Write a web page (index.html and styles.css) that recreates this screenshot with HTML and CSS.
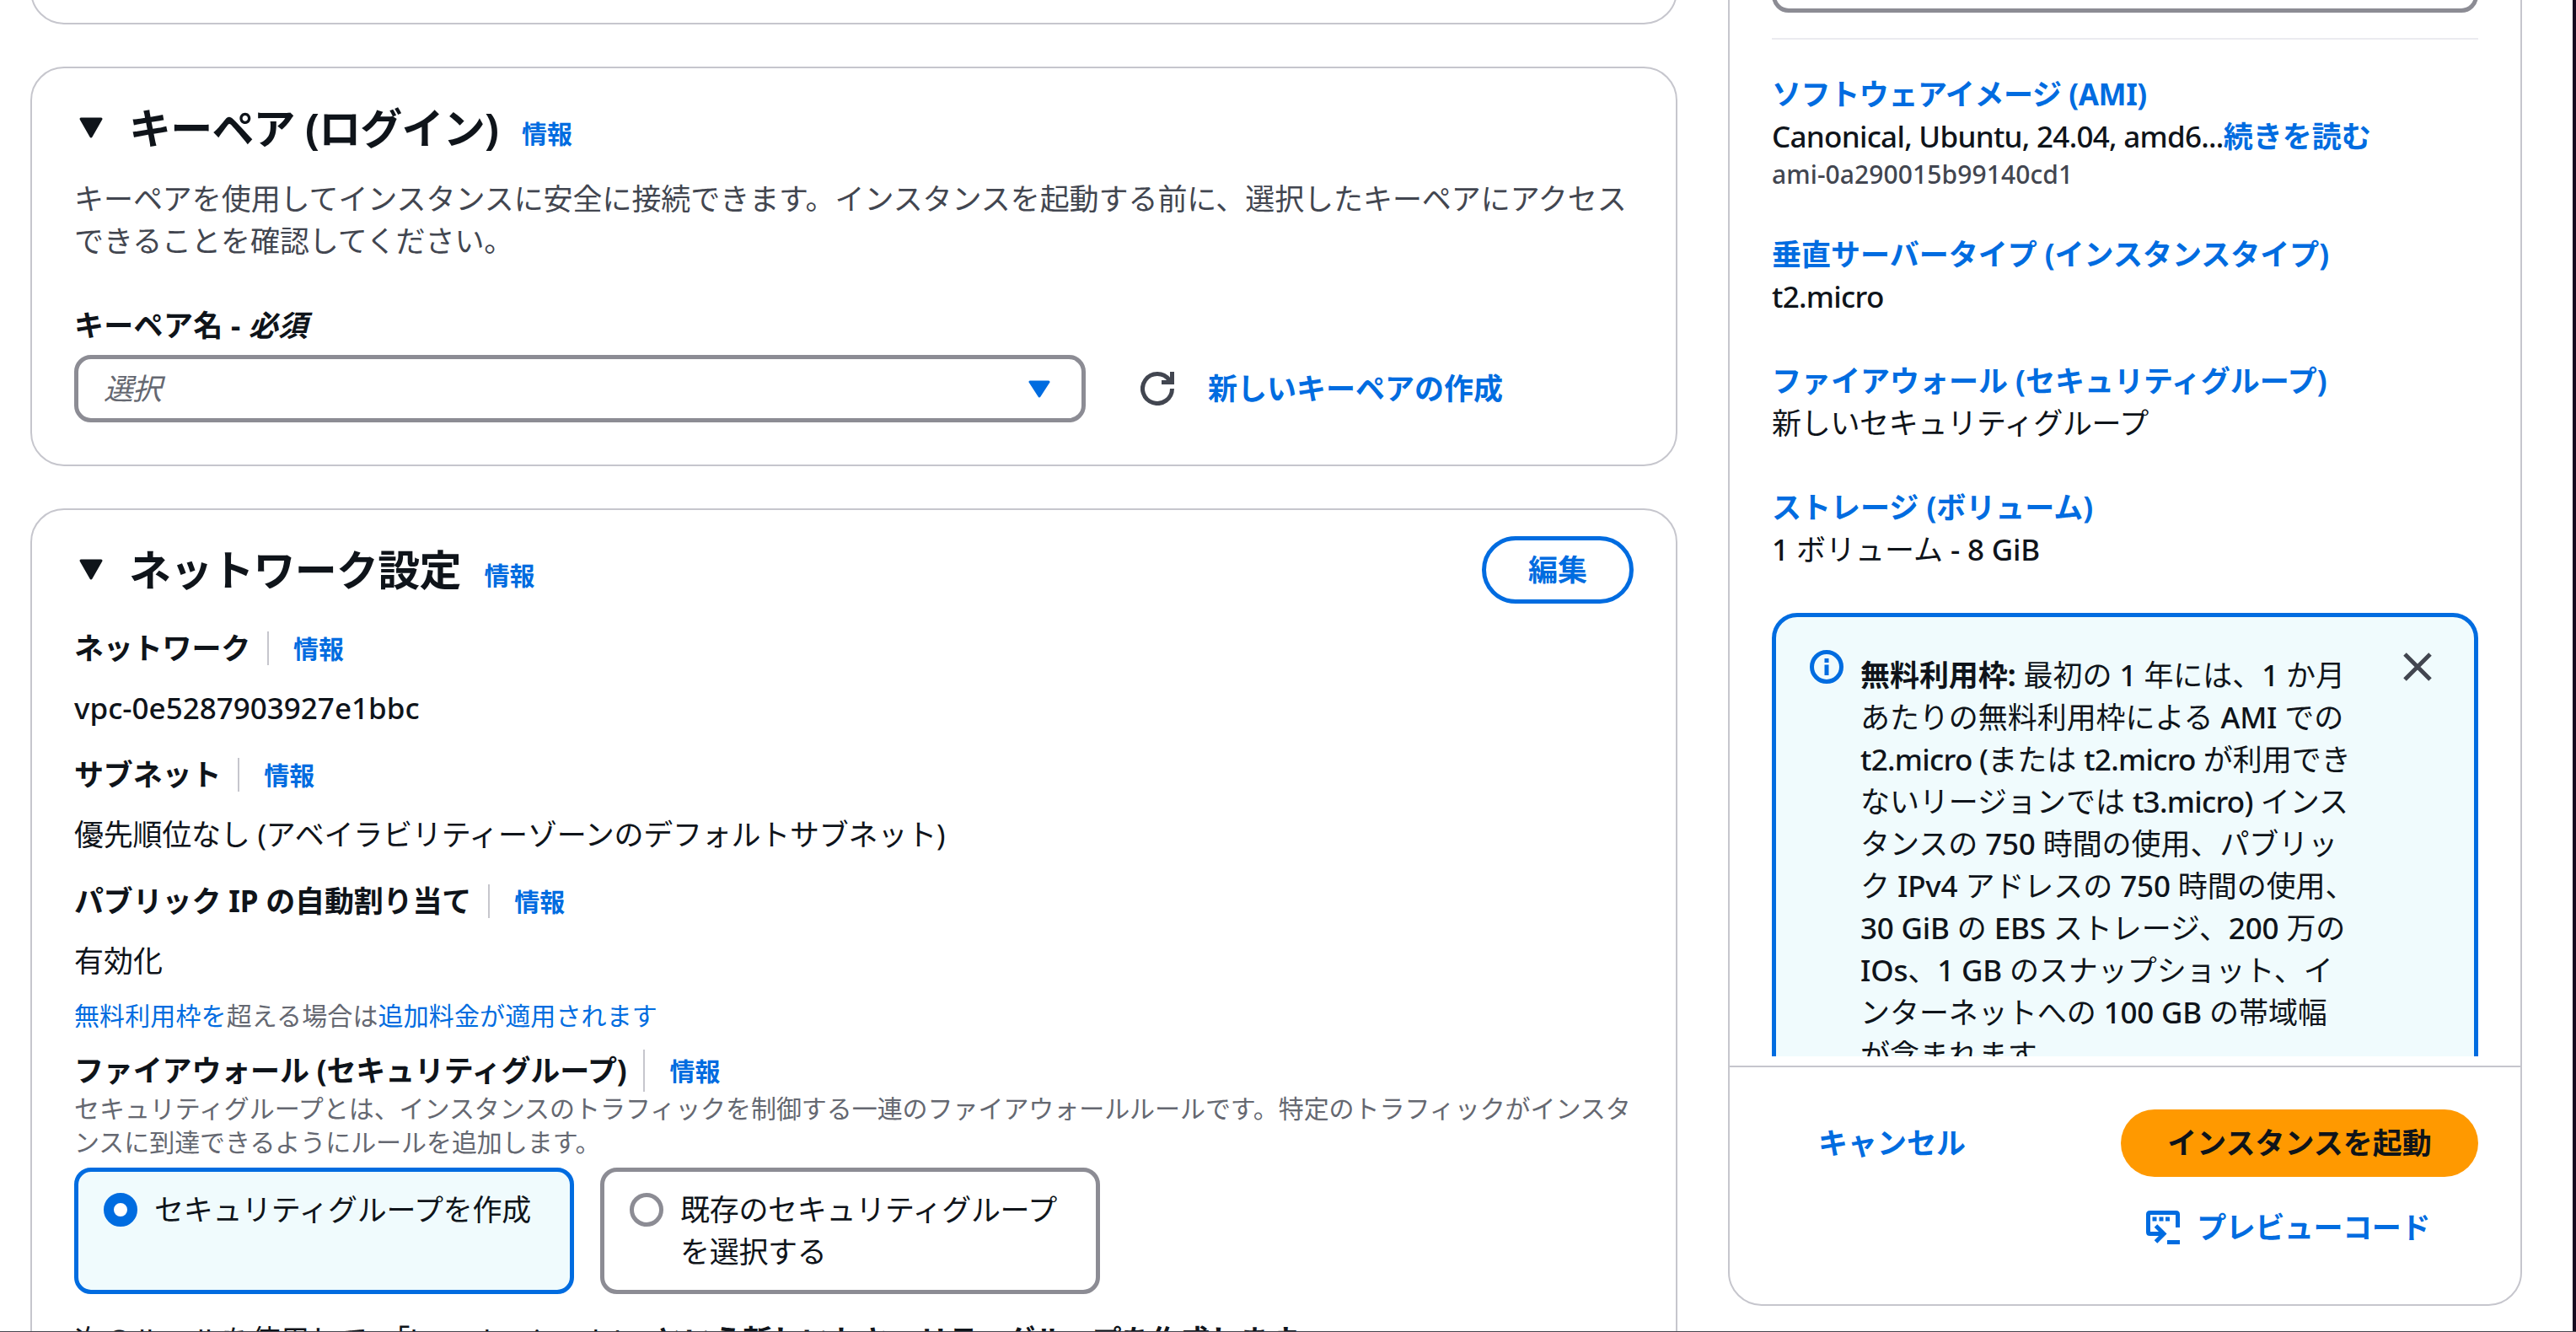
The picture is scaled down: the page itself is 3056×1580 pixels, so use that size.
FILE: index.html
```
<!DOCTYPE html>
<html lang="ja">
<head>
<meta charset="utf-8">
<title>インスタンスを起動</title>
<link rel="stylesheet" href="styles.css">
</head>
<body>
<div class="page">
  <main class="main">
    <section class="card card-previous"></section>

    <section class="card card-keypair">
      <header class="card-header">
        <svg class="caret" viewBox="0 0 30 26"><path d="M3 2h24L15 23z"/></svg>
        <h2 class="heading">キーペア (ログイン)</h2>
        <a class="info">情報</a>
      </header>
      <p class="description">キーペアを使用してインスタンスに安全に接続できます。インスタンスを起動する前に、選択したキーペアにアクセス<br>できることを確認してください。</p>
      <div class="label required">キーペア名 - <i>必須</i></div>
      <div class="select-row">
        <div class="select">
          <span class="placeholder">選択</span>
          <svg class="select-caret" viewBox="0 0 26 21"><path d="M2 2h22L13 19z"/></svg>
        </div>
        <svg class="refresh" viewBox="0 0 40 40"><path d="M37.5 20A17.5 17.5 0 1 1 34 9.500L37.500 12.500M37.500 0v12.500H25"/></svg>
        <a class="link">新しいキーペアの作成</a>
      </div>
    </section>

    <section class="card card-network">
      <header class="card-header network-header">
        <svg class="caret" viewBox="0 0 30 26"><path d="M3 2h24L15 23z"/></svg>
        <h2 class="heading">ネットワーク設定</h2>
        <a class="info">情報</a>
        <button class="edit">編集</button>
      </header>
      <div class="field first"><span class="label">ネットワーク</span><a class="info divided">情報</a></div>
      <div class="value latin vpc">vpc-0e5287903927e1bbc</div>
      <div class="field"><span class="label">サブネット</span><a class="info divided">情報</a></div>
      <div class="value subnet">優先順位なし (アベイラビリティーゾーンのデフォルトサブネット)</div>
      <div class="field"><span class="label">パブリック IP の自動割り当て</span><a class="info divided">情報</a></div>
      <div class="value">有効化</div>
      <div class="small charge"><a>無料利用枠を</a>超える場合は<a>追加料金が適用されます</a></div>
      <div class="field firewall"><span class="label">ファイアウォール (セキュリティグループ)</span><a class="info divided tall">情報</a></div>
      <div class="small">セキュリティグループとは、インスタンスのトラフィックを制御する一連のファイアウォールルールです。特定のトラフィックがインスタ<br>ンスに到達できるようにルールを追加します。</div>
      <div class="tiles">
        <label class="tile selected"><span class="radio"></span><span>セキュリティグループを作成</span></label>
        <label class="tile"><span class="radio"></span><span>既存のセキュリティグループ<br>を選択する</span></label>
      </div>
      <div class="rules">次のルールを使用して、「<span class="group-name">launch-wizard-1</span>」<b>という新しいセキュリティグループを作成します。</b></div>
    </section>
  </main>

  <aside class="summary">
    <div class="summary-body">
      <div class="summary-input"></div>
      <hr class="rule">
      <div class="item">
        <a class="item-title ami-title">ソフトウェアイメージ (AMI)</a>
        <div><span class="latin ami-name">Canonical, Ubuntu, 24.04, amd6...</span><a class="more">続きを読む</a></div>
        <div class="latin ami">ami-0a290015b99140cd1</div>
      </div>
      <div class="item">
        <a class="item-title">垂直サーバータイプ (インスタンスタイプ)</a>
        <div class="latin type">t2.micro</div>
      </div>
      <div class="item">
        <a class="item-title">ファイアウォール (セキュリティグループ)</a>
        <div class="group">新しいセキュリティグループ</div>
      </div>
      <div class="item">
        <a class="item-title">ストレージ (ボリューム)</a>
        <div><span class="latin">1</span> ボリューム <span class="latin">- 8 GiB</span></div>
      </div>
      <div class="alert">
        <svg class="alert-icon" viewBox="0 0 40 40"><circle cx="20" cy="20" r="17.5"/><path d="M20 17.500v12.500M20 10v5"/></svg>
        <div class="alert-text"><b>無料利用枠:</b> 最初の <span class="latin">1</span> 年には、<span class="latin">1</span> か月<br>あたりの無料利用枠による <span class="latin">AMI</span> での<br><span class="latin type">t2.micro (</span>または <span class="latin type">t2.micro</span> が利用でき<br>ないリージョンでは <span class="latin type">t3.micro)</span> インス<br>タンスの <span class="latin">750</span> 時間の使用、パブリッ<br>ク <span class="latin">IPv4</span> アドレスの <span class="latin">750</span> 時間の使用、<br><span class="latin">30 GiB</span> の <span class="latin">EBS</span> ストレージ、<span class="latin">200</span> 万の<br><span class="latin">IOs</span>、<span class="latin">1 GB</span> のスナップショット、イ<br>ンターネットへの <span class="latin">100 GB</span> の帯域幅<br>が含まれます。</div>
        <svg class="close" viewBox="0 0 34 34"><path d="M2 2l30 30M32 2L2 32"/></svg>
      </div>
    </div>
    <footer class="summary-footer">
      <div class="actions">
        <a class="link">キャンセル</a>
        <button class="launch">インスタンスを起動</button>
      </div>
      <a class="link preview">
        <svg class="preview-icon" viewBox="0 0 40 40"><path d="M37.500 20V4.500Q37.500 2.500 35.500 2.500H4.500Q2.500 2.500 2.500 4.500V25.500Q2.500 27.500 4.500 27.500H21M11.500 18l9.500 9.500L11.500 37M25 37.500h15"/><path class="dots" d="M7.500 10h5M15.500 10h5M23 10h5"/></svg>
        <span>プレビューコード</span>
      </a>
    </footer>
  </aside>
  <div class="window-edge"></div>
</div>
</body>
</html>
```
FILE: styles.css
```
* { box-sizing: border-box; }
html, body { margin: 0; height: 1580px; overflow: hidden; }
body {
  background: #fff;
  color: #0f141a;
  font: 400 35px/50px "Noto Sans", "Noto Sans CJK JP", sans-serif;
  text-spacing-trim: space-all;
  white-space: nowrap;
}
a { color: #006ce0; }
button { font: inherit; }
p, h2 { margin: 0; }
svg { display: block; flex: none; fill: none; }
.latin { font-weight: 500; letter-spacing: -0.2px; }
.page {
  display: flex;
  height: 1580px;
  overflow: hidden;
  border-bottom: 1px solid #48464f;
}

.main { flex: none; width: 1954px; margin-left: 36px; }
.card {
  border: 2px solid #c6c6cd;
  border-radius: 40px;
  padding: 0 50px;
}
.card-previous { height: 129px; margin-top: -100px; }
.card-keypair { height: 474px; margin-top: 50px; padding-top: 41px; }
.card-network { height: 1100px; margin-top: 50px; padding-top: 31px; }

.card-header { display: flex; align-items: center; height: 60px; }
.network-header { height: 80px; }
.caret { width: 30px; height: 26px; margin: 0 30px 0 5px; fill: #0f141a; stroke: #0f141a; stroke-width: 3; stroke-linejoin: round; }
.heading { font-size: 50px; line-height: 60px; font-weight: 700; letter-spacing: -0.8px; }
.info { font-size: 30px; line-height: 40px; font-weight: 600; }
.card-header .info { margin: 14px 0 0 28px; }
.description { margin-top: 29px; color: #424650; letter-spacing: -0.06px; }
.label { font-weight: 700; letter-spacing: -0.15px; }
.label.required { margin-top: 50px; letter-spacing: 0.3px; }

.select-row { display: flex; align-items: center; margin-top: 10px; }
.select {
  display: flex;
  align-items: center;
  justify-content: space-between;
  width: 1200px;
  height: 80px;
  padding: 0 37px 0 30px;
  border: 5px solid #8c8c94;
  border-radius: 20px;
}
.placeholder { color: #656871; font-style: italic; letter-spacing: -1px; }
.select-caret { width: 26px; height: 21px; fill: #006ce0; stroke: #006ce0; stroke-width: 3; stroke-linejoin: round; }
.refresh { width: 40px; height: 40px; margin: 0 40px 0 65px; stroke: #424650; stroke-width: 5; }
.link { font-weight: 700; }

.edit {
  width: 180px;
  height: 80px;
  margin-left: auto;
  padding: 0;
  border: 5px solid #006ce0;
  border-radius: 40px;
  background: #fff;
  color: #006ce0;
  font-weight: 700;
}
.field { display: flex; align-items: center; height: 50px; margin-top: 29px; }
.field.first { margin-top: 28px; }
.value { margin-top: 21px; }
.vpc { letter-spacing: 0; }
.subnet { letter-spacing: -0.23px; }
.divided { margin-left: 20px; padding-left: 29px; border-left: 2px solid #c6c6cd; padding-top: 2px; line-height: 38px; }
.divided.tall { line-height: 48px; }
.small { font-size: 30px; line-height: 40px; color: #656871; letter-spacing: -0.06px; }
.charge { margin-top: 20px; letter-spacing: 0.12px; }
.field.firewall { margin-top: 20px; }

.tiles { display: flex; gap: 31px; margin-top: 10px; letter-spacing: -0.3px; }
.tile {
  display: flex;
  align-items: flex-start;
  gap: 20px;
  width: 593px;
  height: 150px;
  padding: 20px 30px;
  border: 5px solid #8c8c94;
  border-radius: 20px;
}
.radio { flex: none; width: 40px; height: 40px; margin-top: 5px; border: 5px solid #8c8c94; border-radius: 50%; background: #fff; }
.selected { border-color: #006ce0; background: #f0fbfd; }
.selected .radio { border: 12px solid #006ce0; }
.rules { margin-top: 30px; text-spacing-trim: normal; letter-spacing: -0.1px; }
.group-name { letter-spacing: -0.4px; }

.summary {
  flex: none;
  display: flex;
  flex-direction: column;
  width: 942px;
  height: 1649px;
  margin: -100px 0 0 60px;
  border: 2px solid #c6c6cd;
  border-radius: 40px;
}
.summary-body { height: 1351px; padding: 0 50px; overflow: hidden; }
.summary-input { height: 113px; border: 5px solid #8c8c94; border-radius: 20px; }
.rule { height: 2px; margin: 30px 0 40px; border: 0; background: #ebebf0; }
.item { margin-bottom: 50px; }
.item-title { display: block; font-weight: 700; }
.ami-title { letter-spacing: -0.4px; }
.ami-name { letter-spacing: -0.72px; }
.more { font-weight: 700; }
.ami { font-size: 30px; line-height: 40px; color: #424650; letter-spacing: 0.08px; }
.type { letter-spacing: -0.7px; }
.group { letter-spacing: -0.3px; }
.alert {
  display: flex;
  align-items: flex-start;
  height: 640px;
  padding: 44px 50px 0 40px;
  border: 5px solid #006ce0;
  border-radius: 30px;
  background: #f0fbfd;
}
.alert-icon { width: 40px; height: 40px; margin-top: -5px; stroke: #006ce0; stroke-width: 5; }
.alert-text { width: 640px; margin-left: 20px; letter-spacing: -0.05px; }
.close { width: 34px; height: 34px; margin: -2px 0 0 9px; stroke: #424650; stroke-width: 5; }

.summary-footer { flex: 1; margin-top: 11px; border-top: 2px solid #c6c6cd; padding: 50px 50px 0; }
.actions { display: flex; align-items: center; justify-content: space-between; padding-left: 55px; }
.launch {
  width: 424px;
  height: 80px;
  padding: 0;
  border: 0;
  border-radius: 40px;
  background: #f90;
  color: #0f141a;
  font-weight: 700;
}
.preview { display: flex; align-items: center; justify-content: flex-end; gap: 20px; height: 50px; margin: 35px 57px 0 0; letter-spacing: -0.4px; }
.preview-icon { width: 40px; height: 40px; stroke: #006ce0; stroke-width: 5; }

.window-edge { flex: none; width: 4px; height: 1580px; margin-left: 60px; background: #150a20; }
```
